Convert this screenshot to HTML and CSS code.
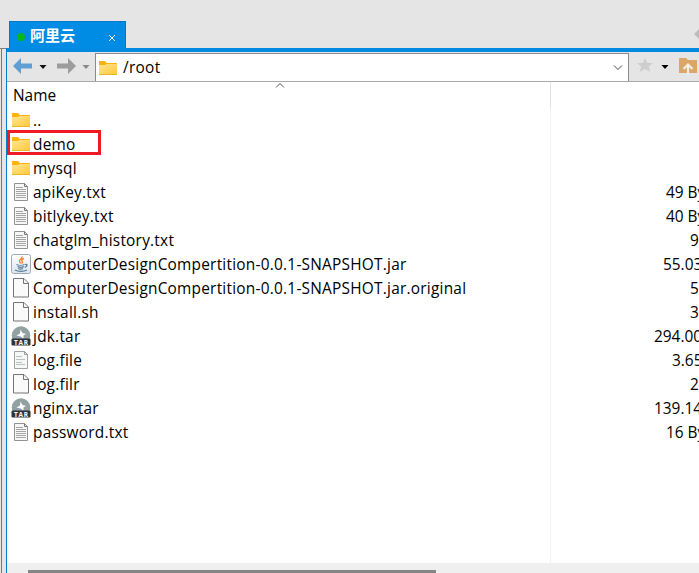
FILE: index.html
```html
<!DOCTYPE html>
<html lang="zh">
<head>
<meta charset="utf-8">
<title>/root</title>
<link rel="stylesheet" href="styles.css">
</head>
<body>
<svg width="0" height="0" class="defs">
  <defs>
    <linearGradient id="fg" x1="0" y1="0" x2="1" y2="1"><stop offset="0" stop-color="#ffe596"/><stop offset="1" stop-color="#ffc937"/></linearGradient>
    <linearGradient id="jg" x1="0" y1="0" x2="0" y2="1"><stop offset="0" stop-color="#fff"/><stop offset="1" stop-color="#dce4ea"/></linearGradient>
    <symbol id="folder" viewBox="0 0 20 20"><path d="M1 3.500q0-.5.5-.5h5.300l2 2H18.500q.5 0 .5.5V9H1z" fill="#f8b40c"/><path d="M1 7h6l1.500-1H19v10.500H1z" fill="url(#fg)"/><path d="M1 16.500h18" stroke="#e9b52d"/></symbol>
    <symbol id="page" viewBox="0 0 20 20"><path d="M2.500 .5h10.500l4.500 4.500v14h-15z" fill="#fafafa" stroke="#757575"/><path d="M12.500 .5v5h5" fill="none" stroke="#757575"/></symbol>
    <symbol id="text" viewBox="0 0 20 20"><path d="M3.500 1.500h10l3 3v14h-13z" fill="#f7f7f7" stroke="#929292"/><path d="M13.500 1.500v3h3" fill="none" stroke="#777"/><path d="M5 5.500h7M5 7.500h10M5 9.500h10M5 11.500h10M5 13.500h10M5 15.500h10" stroke="#a5a5a5"/></symbol>
    <symbol id="log" viewBox="0 0 20 20"><path d="M3.500 1.500h10l3 3v14h-13z" fill="#f7f7f7" stroke="#a2a2a2"/><path d="M13.500 1.500v3h3" fill="none" stroke="#999"/><path d="M5 6.500h6M5 9.500h9M5 12.500h6M5 14.500h9" stroke="#bcc0c0"/></symbol>
    <symbol id="java" viewBox="0 0 20 20"><rect x=".5" y=".5" width="19" height="19" rx="2" fill="url(#jg)" stroke="#9caab5"/><path d="M11 2.500c1 2-3.500 3-2.500 5 .3.700 1 1.200 1.200 2M13 4.500c-2 .7-3 2-1.700 3.200.6.700 0 1.300-.5 1.800" fill="none" stroke="#e8823a" stroke-width="1.400"/><path d="M5.500 10.500c2 1 6 1 8 0M6.500 12.500c2 1 4.500 1 6.500 0M7 14.500c2 .8 3.500.8 5 0M4 16c3 1.800 9 1.800 12 0M14 10.500c3-.5 2.500 2-.3 3" fill="none" stroke="#557d9c" stroke-width="1.200"/></symbol>
    <symbol id="tar" viewBox="0 0 20 20"><circle cx="10" cy="9.500" r="9.300" fill="#93a1a1"/><path d="M9.500 3.500l2 3.500 3.500 1-2.500 1.500v3L9.500 10.500 5.500 9.500 9 7.500z" fill="#fff"/><rect x=".5" y="12.500" width="19" height="7" rx="1.200" fill="#303435"/><text x="10" y="18.500" text-anchor="middle" textLength="14" class="tartext">TAR</text></symbol>
  </defs>
</svg>
<div class="app">
  <div class="tabs">
    <div class="tab"><i class="dot"></i><b>阿里云</b><svg class="close" width="8" height="8"><path d="M1 1l6 6M7 1L1 7" stroke="#fff"/></svg></div>
    <svg class="scroll" width="5" height="10"><path d="M0 5l5-5v10z" fill="#bdbdbd"/></svg>
  </div>
  <div class="main">
    <div class="side"></div>
    <div class="panel">
      <div class="toolbar">
        <svg width="88" height="28"><path d="M6 13l8-8v5.500h11v5H14V21z" fill="#609ed4"/><path d="M32.500 12h7l-3.500 4z" fill="#111"/><path d="M69 13l-8-8v5.500H50v5h11V21z" fill="#9c9c9c"/><path d="M75.500 12h7L79 16z" fill="#888"/></svg>
        <div class="address"><svg class="icon"><use href="#folder"/></svg><span>/root</span><svg class="chev" width="10" height="6"><path d="M1 .5l4 4 4-4" fill="none" stroke="#444"/></svg></div>
        <svg width="70" height="28"><path d="M16 5l2.300 5H24l-4.200 3.600 1.500 5.400-5.300-3-5.300 3 1.500-5.400L8 10h5.700z" fill="#cecece"/><path d="M32.500 12h7L36 16z" fill="#000"/><path d="M50 6q0-1 1-1h6l2 2h9v13H50z" fill="#daa766"/><path d="M59 21.500v-9M54.500 16l4.500-4.500 4.500 4.500" fill="none" stroke="#f5eee5" stroke-width="2.200"/></svg>
      </div>
      <div class="head"><span>Name</span><svg class="sort" width="10" height="6"><path d="M1 5.500l4-4 4 4" fill="none" stroke="#555"/></svg></div>
      <div class="list">
        <div class="row"><svg class="icon"><use href="#folder"/></svg><span class="name">..</span></div>
        <div class="row marked"><svg class="icon"><use href="#folder"/></svg><span class="name">demo</span></div>
        <div class="row"><svg class="icon"><use href="#folder"/></svg><span class="name">mysql</span></div>
        <div class="row"><svg class="icon"><use href="#text"/></svg><span class="name">apiKey.txt</span><span class="size bytes">49 By</span></div>
        <div class="row"><svg class="icon"><use href="#text"/></svg><span class="name">bitlykey.txt</span><span class="size bytes">40 By</span></div>
        <div class="row"><svg class="icon"><use href="#text"/></svg><span class="name">chatglm_history.txt</span><span class="size single">9</span></div>
        <div class="row"><svg class="icon"><use href="#java"/></svg><span class="name">ComputerDesignCompertition-0.0.1-SNAPSHOT.jar</span><span class="size tens">55.03</span></div>
        <div class="row"><svg class="icon"><use href="#page"/></svg><span class="name">ComputerDesignCompertition-0.0.1-SNAPSHOT.jar.original</span><span class="size single">5</span></div>
        <div class="row"><svg class="icon"><use href="#page"/></svg><span class="name">install.sh</span><span class="size single">3</span></div>
        <div class="row"><svg class="icon"><use href="#tar"/></svg><span class="name">jdk.tar</span><span class="size hundreds">294.00</span></div>
        <div class="row"><svg class="icon"><use href="#log"/></svg><span class="name">log.file</span><span class="size units">3.65</span></div>
        <div class="row"><svg class="icon"><use href="#page"/></svg><span class="name">log.filr</span><span class="size single">2</span></div>
        <div class="row"><svg class="icon"><use href="#tar"/></svg><span class="name">nginx.tar</span><span class="size hundreds">139.14</span></div>
        <div class="row"><svg class="icon"><use href="#text"/></svg><span class="name">password.txt</span><span class="size bytes">16 By</span></div>
      </div>
      <div class="track"><div class="thumb"></div></div>
    </div>
  </div>
</div>
</body>
</html>
```
FILE: styles.css
```css
*, *::after { box-sizing: border-box; }
body { margin: 0; overflow: hidden; background: #e5e5e5; color: #000; font: 15.4px/24px "Open Sans", "Noto Sans CJK SC", sans-serif; }
svg { display: block; flex: none; }
.defs { position: absolute; }
.app { display: flex; flex-direction: column; width: 699px; height: 573px; overflow: hidden; }
.tabs { display: flex; justify-content: space-between; height: 48px; padding: 21px 0 0 9px; }
.tab { display: flex; align-items: center; width: 117px; height: 27px; padding: 0 9px 0 7px; background: #008be5; border: 1px solid #0078c6; border-bottom: 0; color: #fff; }
.tab b { margin-left: 5px; font: 700 15px/24px "Noto Sans CJK SC", sans-serif; }
.dot { width: 8px; height: 8px; border-radius: 50%; background: #08b71c; margin-top: 4px; }
.close { margin: 5px 0 0 auto; }
.scroll { margin-top: 8px; }
.main { display: flex; flex: 1; min-height: 0; }
.side { width: 6px; border-top: 1px solid #808080; background: linear-gradient(90deg, #e5e5e5 1px, #777 1px 2px, #e5e5e5 2px); }
.panel { display: flex; flex-direction: column; width: 693px; border-left: 1px solid #007fd0; background: #fff; }
.toolbar { display: flex; height: 34px; padding-top: 1px; background: #e5e5e5; border-top: 4px solid #008be0; border-bottom: 1px solid #aaa; }
.address { display: flex; align-items: center; width: 534px; height: 28px; padding: 0 5px 0 2px; background: #fff; border: 1px solid #8a8a8a; border-bottom: 0; }
.address span { margin-left: 5px; padding-top: 1px; letter-spacing: .3px; }
.icon { width: 20px; height: 20px; }
.chev { margin-left: auto; }
.head { display: flex; height: 26px; padding-left: 6px; background: linear-gradient(#e2e2e2, #e2e2e2) 543px 0 / 1px 26px no-repeat; }
.head span { width: 262px; padding-top: 2px; }
.list { flex: 1; background: linear-gradient(#eaf2fc, #eaf2fc) 543px 0 / 1px 100% no-repeat; }
.row { display: flex; align-items: center; height: 24px; padding-left: 4px; }
.name { width: 616px; flex: none; margin-left: 2px; padding-top: 2px; white-space: nowrap; letter-spacing: .24px; }
.marked { position: relative; }
.marked::after { content: ""; position: absolute; left: 0; top: -2px; width: 94px; height: 25px; border: 3px solid #ed1c24; }
.size { flex: none; padding-top: 2px; white-space: nowrap; }
.bytes { margin-left: 17px; }
.single { margin-left: 41px; }
.tens { margin-left: 14px; }
.units { margin-left: 23px; }
.hundreds { margin-left: 5px; }
.track { height: 10px; padding: 7px 0 0 21px; background: #efefef; }
.thumb { width: 408px; height: 3px; background: #858585; }
.tartext { font: 700 6.5px "Open Sans", sans-serif; fill: #fff; }
```
